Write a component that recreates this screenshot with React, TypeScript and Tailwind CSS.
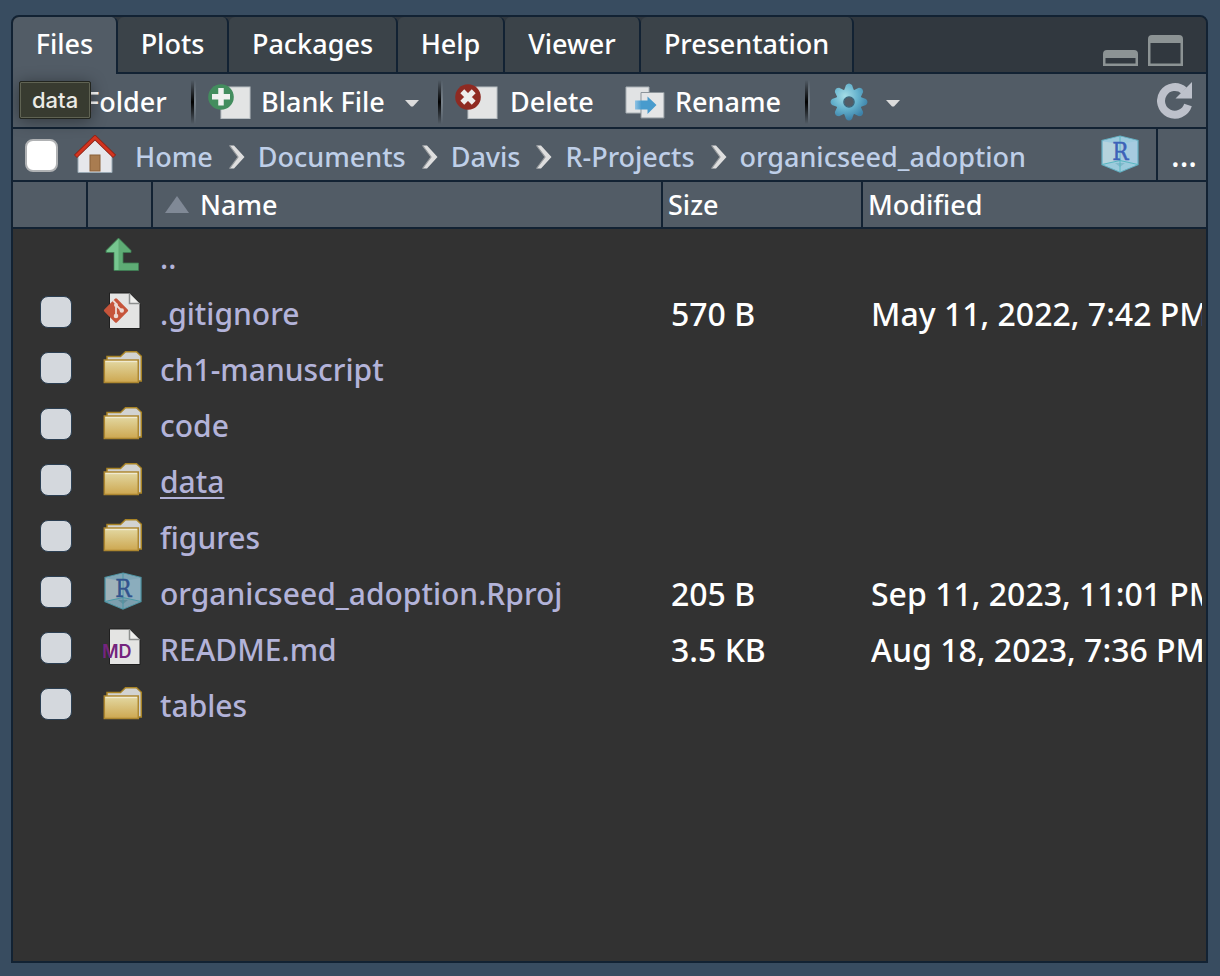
import React from "react";

type Kind = "up" | "git" | "folder" | "rproj" | "md";

interface Entry {
  name: string;
  kind: Kind;
  size?: string;
  modified?: string;
  hovered?: boolean;
}

const entries: Entry[] = [
  { name: "..", kind: "up" },
  { name: ".gitignore", kind: "git", size: "570 B", modified: "May 11, 2022, 7:42 PM" },
  { name: "ch1-manuscript", kind: "folder" },
  { name: "code", kind: "folder" },
  { name: "data", kind: "folder", hovered: true },
  { name: "figures", kind: "folder" },
  { name: "organicseed_adoption.Rproj", kind: "rproj", size: "205 B", modified: "Sep 11, 2023, 11:01 PM" },
  { name: "README.md", kind: "md", size: "3.5 KB", modified: "Aug 18, 2023, 7:36 PM" },
  { name: "tables", kind: "folder" },
];

const tabs = [
  { label: "Files", width: "w-[105px]" },
  { label: "Plots", width: "w-[111px]" },
  { label: "Packages", width: "w-[169px]" },
  { label: "Help", width: "w-[107px]" },
  { label: "Viewer", width: "w-[136px]" },
  { label: "Presentation", width: "w-[213px]" },
];

const crumbs = ["Home", "Documents", "Davis", "R-Projects", "organicseed_adoption"];

function FolderIcon() {
  return (
    <svg width="40" height="34" viewBox="0 0 40 34" aria-hidden="true">
      <defs>
        <linearGradient id="folderFront" x1="0" y1="0" x2="0" y2="1">
          <stop offset="0" stopColor="#e3d9a4" />
          <stop offset="1" stopColor="#cda750" />
        </linearGradient>
      </defs>
      <path d="M4 11V6.500H17.500L22.500 1.800H33.500L38.300 6.300V31H30Z" fill="#d2d3d1" stroke="#a88325" strokeWidth="1.500" />
      <rect x="1.300" y="10" width="34" height="22.500" fill="url(#folderFront)" stroke="#ad8730" strokeWidth="1.500" />
      <path d="M2.500 11.500H34" stroke="#f0ead0" strokeWidth="1.300" />
    </svg>
  );
}

function UpIcon() {
  return (
    <svg width="40" height="36" viewBox="0 0 40 36" aria-hidden="true">
      <path d="M15.500 1L28 13.500V15.500H20V26H35.500V33.500H11V15.500H3V13.500Z" fill="#5eac75" stroke="#3f7f54" strokeWidth="0.800" />
      <path d="M15.500 2L4 13.500V15H11.500V33H15.500Z" fill="#77c790" />
    </svg>
  );
}

function Page() {
  return (
    <>
      <path d="M6.500 1H26.500L37 11.500V36.500H6.500Z" fill="#e4e4e3" stroke="#1f1f1f" strokeWidth="1" />
      <path d="M26.500 1.500V11.500H36.500" fill="#eeeeec" stroke="#8d8f8e" strokeWidth="1.500" />
    </>
  );
}

function GitIcon() {
  return (
    <svg width="40" height="38" viewBox="0 0 40 38" aria-hidden="true">
      <Page />
      <rect x="4" y="9.500" width="18" height="18" rx="1.500" fill="#c6543a" transform="rotate(45 13 18.500)" />
      <path d="M10 8.500L13 11.500V24.500M13 13L18.500 18.500" stroke="#ecd9d3" strokeWidth="1.800" fill="none" />
      <circle cx="13" cy="13" r="2" fill="#ecd9d3" />
      <circle cx="13" cy="24" r="2.300" fill="#ecd9d3" />
      <circle cx="18.800" cy="18.500" r="2.200" fill="#ecd9d3" />
    </svg>
  );
}

function MdIcon() {
  return (
    <svg width="40" height="38" viewBox="0 0 40 38" aria-hidden="true">
      <Page />
      <text x="-1" y="29.500" fontFamily="Inter, sans-serif" fontSize="18" fontWeight="600" fill="#74247e">
        MD
      </text>
    </svg>
  );
}

function RCube({ dim }: { dim?: boolean }) {
  return (
    <svg width="40" height="38" viewBox="0 0 40 38" aria-hidden="true">
      <path d="M20 1L38 5.500V29.500L20 37L2 29.500V5.500Z" fill={dim ? "#8badbd" : "#a6cbe0"} stroke={dim ? "#4f94a3" : "#64afc1"} strokeWidth="1.200" />
      <path d="M3 6.500L20 9V25.500L3 29Z" fill={dim ? "#9fb2b9" : "#b5d3dd"} />
      <path d="M20 1.500L37.500 6L20 9L2.500 6Z" fill={dim ? "#7fa6b6" : "#9bcadd"} />
      <path d="M20 25.500L37 29.500L20 36.500L3 29.500Z" fill={dim ? "#7c9fae" : "#9bcbdc"} />
      <path d="M15 28H25L20 32Z" fill={dim ? "#628d9c" : "#80b9cb"} />
      <path d="M20 1V37M2 29.500L20 25.500L38 29.500" stroke={dim ? "#4b98a6" : "#58b6c0"} strokeWidth="1" fill="none" />
      <text
        x="20.500"
        y="24.500"
        textAnchor="middle"
        fontFamily="DejaVu Serif Condensed, DejaVu Serif, serif"
        fontSize="24"
        fill={dim ? "#31538d" : "#3d62b8"}
        stroke={dim ? "#31538d" : "#3d62b8"}
        strokeWidth="0.400"
      >
        R
      </text>
    </svg>
  );
}

function EntryIcon({ kind }: { kind: Kind }) {
  if (kind === "up") return <UpIcon />;
  if (kind === "git") return <GitIcon />;
  if (kind === "rproj") return <RCube dim />;
  if (kind === "md") return <MdIcon />;
  return <FolderIcon />;
}

function BlankFileIcon() {
  return (
    <svg width="43" height="38" viewBox="0 0 43 38" aria-hidden="true">
      <rect x="13" y="4" width="29" height="31.500" fill="#e3e4e4" stroke="#b9bfc3" />
      <circle cx="13" cy="14" r="12.800" fill="#438d5e" />
      <path d="M13 5V22.500M4 13.800H22" stroke="#f0f1f0" strokeWidth="5.500" />
    </svg>
  );
}

function DeleteIcon() {
  return (
    <svg width="43" height="38" viewBox="0 0 43 38" aria-hidden="true">
      <rect x="13" y="4" width="29" height="31.500" fill="#e3e4e4" stroke="#b9bfc3" />
      <circle cx="13" cy="14" r="12.800" fill="#8f2a22" />
      <path d="M7.300 8.300L18.700 19.700M18.700 8.300L7.300 19.700" stroke="#eeecec" strokeWidth="5.500" />
    </svg>
  );
}

function RenameIcon() {
  return (
    <svg width="40" height="38" viewBox="0 0 40 38" aria-hidden="true">
      <path d="M1 4H24V30H1Z" fill="#e1e3e4" stroke="#a9b0b5" />
      <path d="M16 9.500H39V35H16Z" fill="#e4e5e6" stroke="#8d959b" />
      <defs>
        <linearGradient id="renameArrow" x1="0" y1="0" x2="1" y2="0">
          <stop offset="0" stopColor="#8fc3e4" />
          <stop offset="0.300" stopColor="#489bcd" />
        </linearGradient>
      </defs>
      <path d="M10 17.500H22.500V13.500L31.500 22L22.500 31V26.500H10Z" fill="url(#renameArrow)" />
    </svg>
  );
}

const TEETH = [0, 45, 90, 135, 180, 225, 270, 315];

function GearIcon() {
  return (
    <svg width="38" height="40" viewBox="0 0 38 40" aria-hidden="true">
      <defs>
        <radialGradient id="gearFill" gradientUnits="userSpaceOnUse" cx="15" cy="14" r="24">
          <stop offset="0" stopColor="#a5dde6" />
          <stop offset="0.550" stopColor="#65b2cd" />
          <stop offset="1" stopColor="#3d82a9" />
        </radialGradient>
      </defs>
      <mask id="gearMask">
        <g fill="#fff">
          <circle cx="19" cy="20" r="13" />
          {TEETH.map((angle) => (
            <path key={angle} d="M13.500 10L16 3Q19 0 22 3L24.500 10Z" transform={`rotate(${angle} 19 20)`} />
          ))}
        </g>
        <circle cx="19" cy="20" r="5" fill="#000" />
      </mask>
      <rect width="38" height="40" fill="url(#gearFill)" mask="url(#gearMask)" />
      <circle cx="19" cy="20" r="5.200" fill="none" stroke="#3a6479" strokeWidth="1.200" />
    </svg>
  );
}

function HouseIcon() {
  return (
    <svg width="42" height="38" viewBox="0 0 42 38" aria-hidden="true">
      <path d="M4 21L21 5L38 21V37.500H4Z" fill="#e6e7eb" stroke="#9aaab5" />
      <rect x="16" y="20" width="10" height="16" fill="#a97c50" stroke="#8a6138" />
      <path d="M1.500 21.500L21 2.500L40.500 21.500" fill="none" stroke="#8e2317" strokeWidth="4.500" />
      <path d="M2 21L21 2.500L40 21" fill="none" stroke="#d3341f" strokeWidth="2.800" />
    </svg>
  );
}

function RefreshIcon() {
  return (
    <svg width="36" height="38" viewBox="0 0 36 38" aria-hidden="true">
      <path d="M27 9.500A13.800 13.800 0 1 0 31 24" fill="none" stroke="#bdc1cb" strokeWidth="8" />
      <path d="M35 1V17.500H18.500Z" fill="#bdc1cb" />
    </svg>
  );
}

function Chevron() {
  return (
    <svg width="16" height="24" viewBox="0 0 16 24" aria-hidden="true" className="shrink-0">
      <path d="M0.500 0.500H5L15.500 12L5 23.500H0.500L9 12Z" fill="#dedede" />
      <path d="M0.500 0.500L9 12L0.500 23.500" fill="none" stroke="#969a9d" strokeWidth="1.200" />
    </svg>
  );
}

function Caret() {
  return (
    <svg width="14" height="7" viewBox="0 0 14 7" aria-hidden="true">
      <path d="M0 0H14L8 6.500H6Z" fill="#dcdcdc" />
    </svg>
  );
}

function Separator() {
  return (
    <div className="flex h-[44px] w-[5px] shrink-0" role="separator">
      <div className="w-[3px] bg-linear-to-b from-transparent via-black to-transparent" />
      <div className="w-[2px] bg-linear-to-b from-transparent via-[#77818a] to-transparent" />
    </div>
  );
}

export default function App() {
  return (
    <div className="flex min-h-screen flex-col bg-[#384c60] pt-[15px] pr-3 pb-[13px] pl-[11px] font-['Noto_Sans',sans-serif] text-[27px] leading-8 font-medium text-white">
      <main className="flex grow flex-col overflow-hidden rounded-t-lg border-2 border-[#122233] bg-[#323232]">
        <div className="flex h-[57px] items-stretch bg-[#31383f]">
          <div role="tablist" className="flex">
            {tabs.map((tab, i) => (
              <button
                key={tab.label}
                type="button"
                role="tab"
                aria-selected={i === 0}
                className={`${tab.width} shrink-0 rounded-t-md border-r-2 border-[#122233] ${
                  i === 0 ? "bg-[#525c66] pb-1" : "border-b-2 bg-[#3b4349] pb-0.5"
                }`}
              >
                {tab.label}
              </button>
            ))}
          </div>
          <div className="flex grow items-end justify-end gap-[10px] border-b-2 border-[#122233] pr-[23px] pb-[6px]">
            <button type="button" aria-label="Minimize">
              <svg width="35" height="16" viewBox="0 0 35 16" className="block">
                <path d="M4 0H31Q35 0 35 4V16H0V4Q0 0 4 0ZM2.500 8V13.500H32.500V8Z" fill="#8c9394" fillRule="evenodd" />
              </svg>
            </button>
            <button type="button" aria-label="Maximize">
              <svg width="35" height="31" viewBox="0 0 35 31" className="block">
                <path d="M4 0H31Q35 0 35 4V31H0V4Q0 0 4 0ZM2.500 8V28.500H32.500V8Z" fill="#8c9394" fillRule="evenodd" />
              </svg>
            </button>
          </div>
        </div>

        <div className="relative flex h-[55px] items-center border-b-2 border-[#122233] bg-[#525c66] pt-0.5 whitespace-nowrap">
          <button type="button" className="flex w-[178px] shrink-0 items-center gap-3 pl-5">
            <FolderIcon />
            <span>Folder</span>
          </button>
          <Separator />
          <button type="button" className="flex w-[242px] shrink-0 items-center pl-3">
            <BlankFileIcon />
            <span className="pl-[10px]">Blank File</span>
            <span className="pt-1 pl-5">
              <Caret />
            </span>
          </button>
          <Separator />
          <button type="button" className="flex w-[182px] shrink-0 items-center gap-3 pl-3">
            <DeleteIcon />
            <span>Delete</span>
          </button>
          <button type="button" className="flex w-[180px] shrink-0 items-center gap-[10px]">
            <RenameIcon />
            <span>Rename</span>
          </button>
          <Separator />
          <button type="button" aria-label="More file commands" className="flex shrink-0 items-center gap-[18px] pl-5">
            <GearIcon />
            <span className="pt-1">
              <Caret />
            </span>
          </button>
          <button type="button" aria-label="Refresh" className="ml-auto pr-[13px] pb-1">
            <RefreshIcon />
          </button>
          <div
            role="tooltip"
            className="absolute top-[7px] left-[6px] rounded-xs border border-[#22251f] bg-[#383b30] px-3 py-0.5 font-[Inter,sans-serif] text-[22px] font-medium text-[#ebebe6] shadow-[0_2px_16px_rgba(0,0,0,0.4)] inset-ring inset-ring-[#606353]"
          >
            data
          </div>
        </div>

        <nav aria-label="Path" className="flex h-[53px] items-center border-b-2 border-[#122233] bg-[#525c66] text-[#bfcfe8]">
          <input
            type="checkbox"
            aria-label="Select all files"
            className="mt-px ml-3 size-[33px] shrink-0 appearance-none rounded-lg border-2 border-[#b0b2b4] bg-white"
          />
          <a href="#root" aria-label="Go to home directory" className="mr-[19px] ml-4 shrink-0 pb-0.5">
            <HouseIcon />
          </a>
          <ol className="flex grow items-center gap-4 pt-1 whitespace-nowrap">
            {crumbs.map((crumb, i) => (
              <li key={crumb} className="flex items-center gap-[13px]">
                {i > 0 && <Chevron />}
                <a href="#path">{crumb}</a>
              </li>
            ))}
          </ol>
          <button type="button" aria-label="Open project" className="mr-4 shrink-0 pb-0.5">
            <RCube />
          </button>
          <button type="button" aria-label="Go to directory" className="h-full w-[50px] shrink-0 border-l-2 border-[#122233] pl-1 text-[32px] text-white">
            ...
          </button>
        </nav>

        <table className="w-full table-fixed border-collapse text-left">
          <colgroup>
            <col className="w-[75px]" />
            <col className="w-[65px]" />
            <col className="w-[510px]" />
            <col className="w-[200px]" />
            <col />
          </colgroup>
          <thead>
            <tr className="h-[47px] bg-[#525c66] shadow-[inset_0_-2px_0_#122233]">
              <th className="p-0 shadow-[inset_-2px_0_0_#122233]" aria-label="Selected" />
              <th className="p-0 shadow-[inset_-2px_0_0_#122233]" aria-label="Type" />
              <th className="p-0 pb-0.5 pl-3 font-medium shadow-[inset_-2px_0_0_#122233]">
                <button type="button" className="flex items-center gap-[11px]">
                  <svg width="24" height="17" viewBox="0 0 24 17" aria-hidden="true">
                    <path d="M12 0L24 17H0Z" fill="#808996" />
                  </svg>
                  Name
                </button>
              </th>
              <th className="p-0 pb-0.5 pl-[5px] font-medium shadow-[inset_-2px_0_0_#122233]">
                <button type="button" className="block">Size</button>
              </th>
              <th className="p-0 pb-0.5 pl-[5px] font-medium">
                <button type="button" className="block">Modified</button>
              </th>
            </tr>
          </thead>
          <tbody className="text-[30px]">
            {entries.map((entry) => (
              <tr key={entry.name} className="h-14">
                <td className="p-0 pb-[3px] pl-[27px]">
                  {entry.kind !== "up" && (
                    <input
                      type="checkbox"
                      aria-label={`Select ${entry.name}`}
                      className="block size-8 appearance-none rounded-lg border border-[#2c3f52] bg-[#d4d8dd]"
                    />
                  )}
                </td>
                <td className="p-0 pb-1 pl-[15px]">
                  <EntryIcon kind={entry.kind} />
                </td>
                <td className="p-0 pt-0.5 pl-[7px] text-[#b3b3d9]">
                  <a href="#entry" className={entry.hovered ? "underline decoration-2 underline-offset-4" : ""}>
                    {entry.name}
                  </a>
                </td>
                <td className="p-0 pt-0.5 pl-2 text-[32px]">{entry.size}</td>
                <td className="p-0 pt-0.5 pr-1 pl-2 text-[32px]">
                  <div className="overflow-hidden leading-12 whitespace-nowrap">{entry.modified}</div>
                </td>
              </tr>
            ))}
          </tbody>
        </table>
      </main>
    </div>
  );
}
